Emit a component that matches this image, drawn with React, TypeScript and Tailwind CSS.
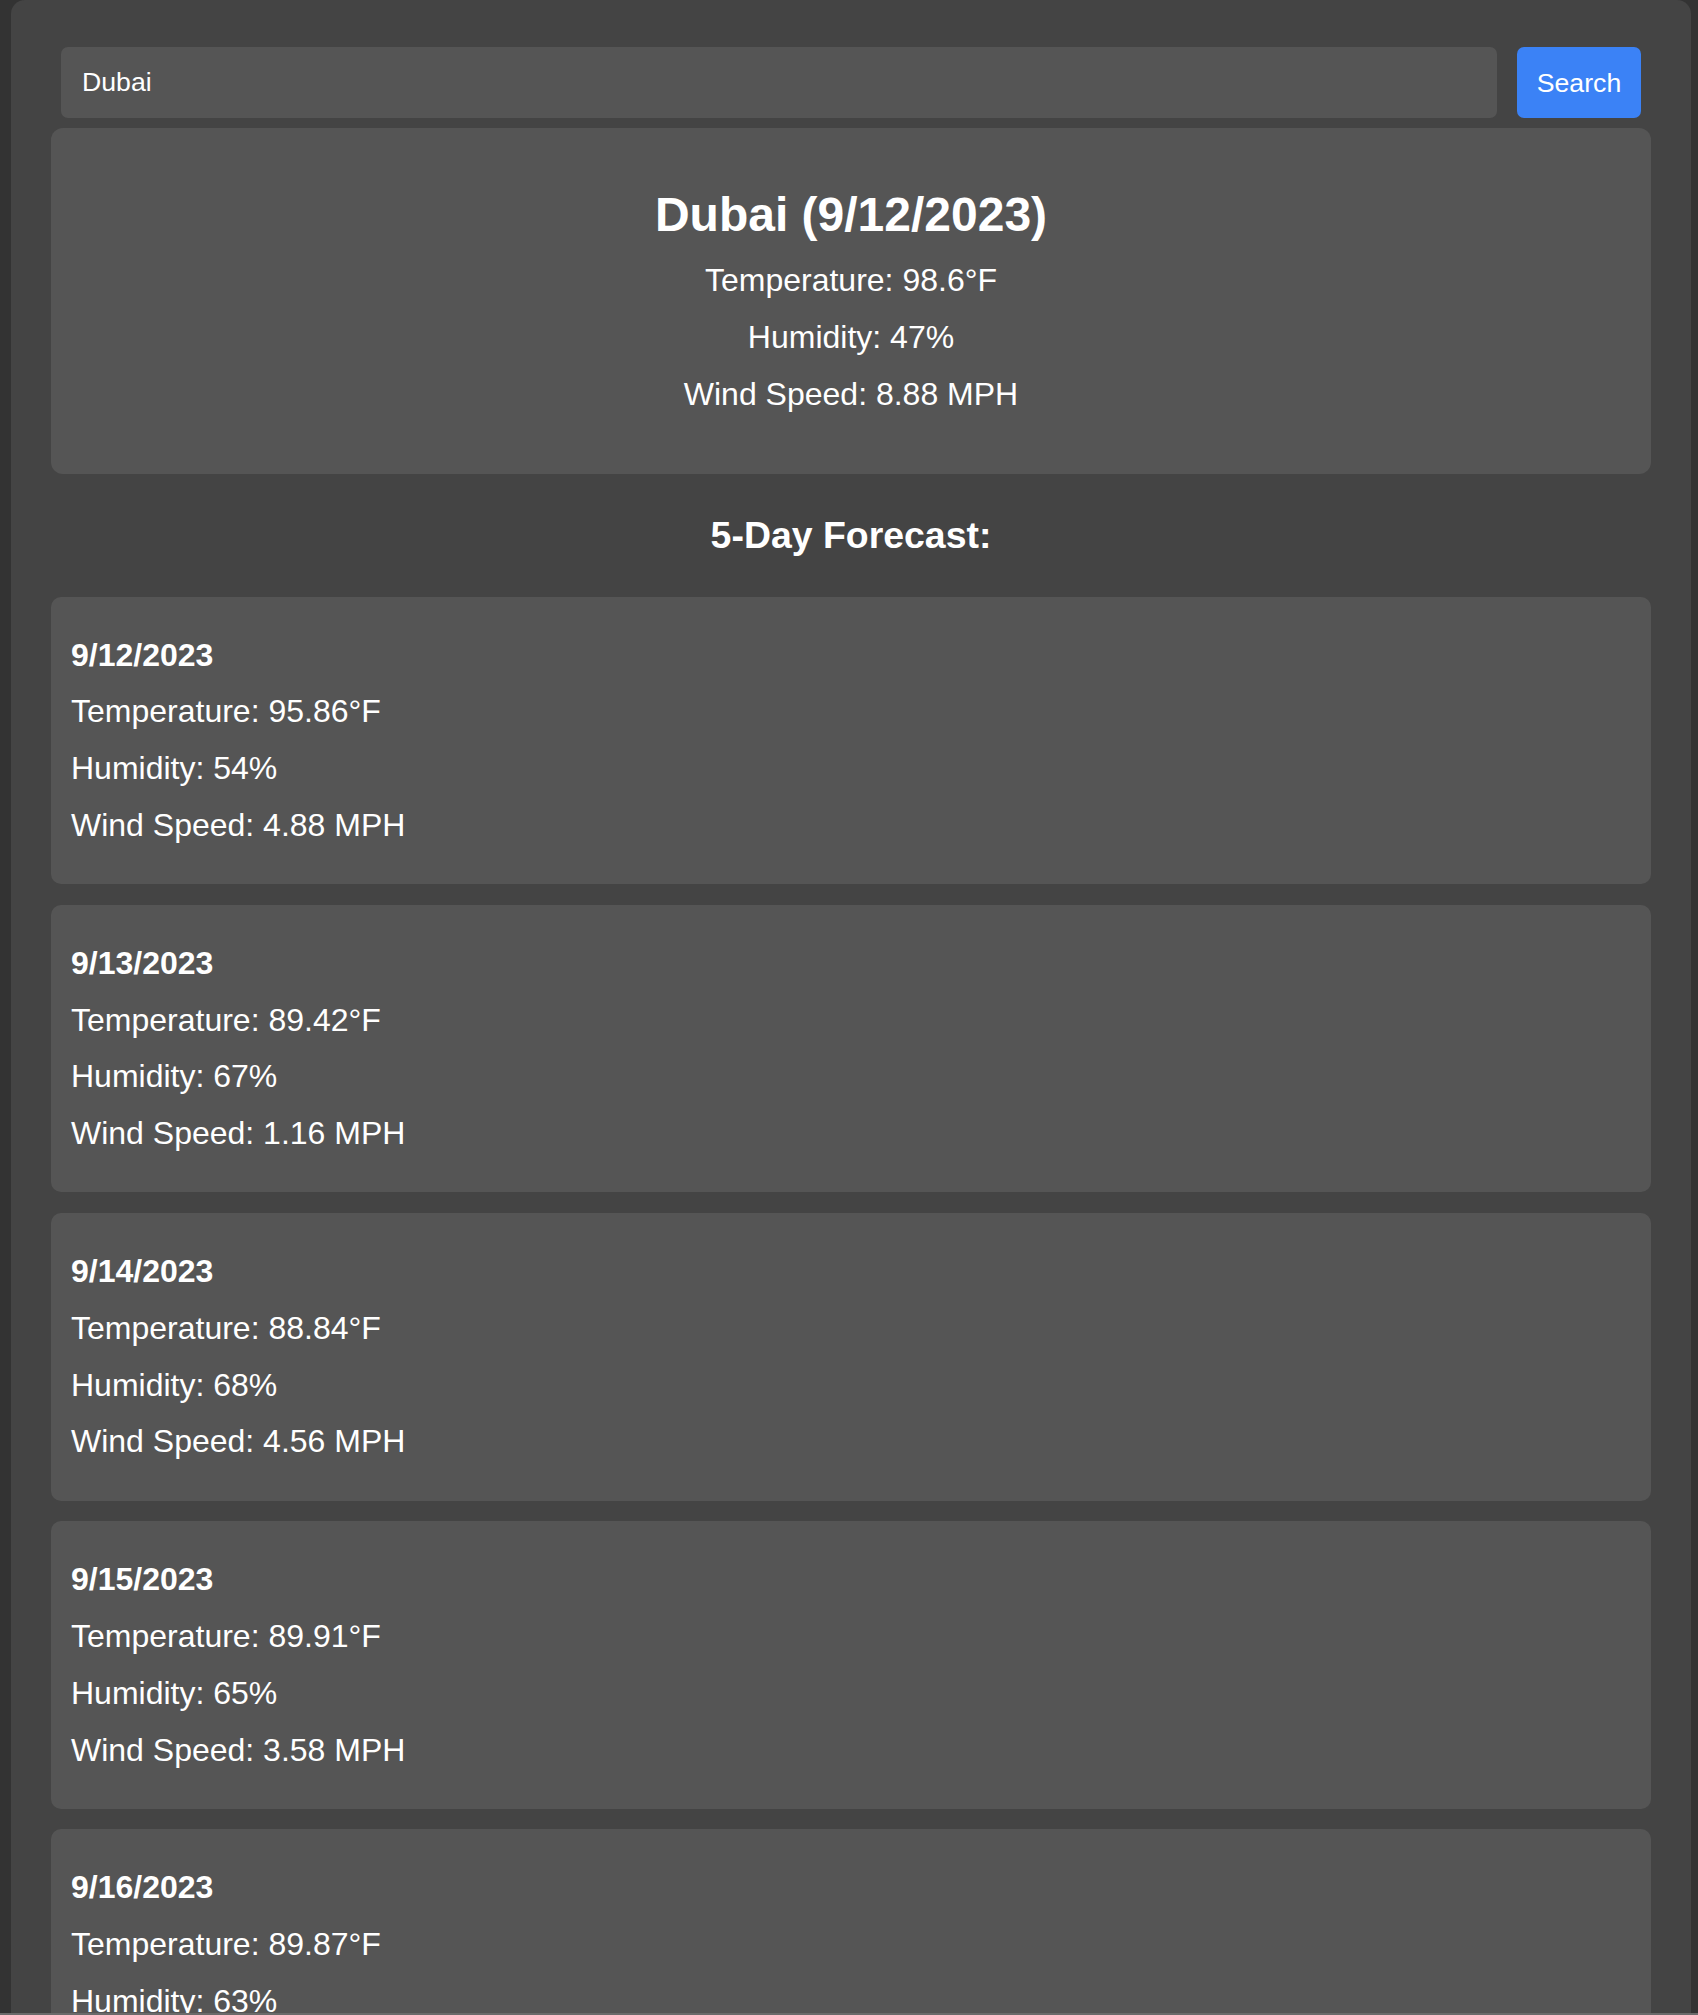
import React from 'react'

type Day = {
    date: string
    temp: string
    humidity: string
    wind: string
}

const forecast: Day[] = [
    { date: '9/12/2023', temp: '95.86', humidity: '54', wind: '4.88' },
    { date: '9/13/2023', temp: '89.42', humidity: '67', wind: '1.16' },
    { date: '9/14/2023', temp: '88.84', humidity: '68', wind: '4.56' },
    { date: '9/15/2023', temp: '89.91', humidity: '65', wind: '3.58' },
    { date: '9/16/2023', temp: '89.87', humidity: '63', wind: '2.41' },
]

const ForecastCard: React.FC<Day> = ({ date, temp, humidity, wind }) => {
    return (
        <div className="flex flex-col gap-[20px] rounded-[10px] bg-[#555555] px-[20px] pt-[40px] pb-[40.5px] text-[32px] leading-[36.8px] text-white">
            <p className="font-bold">{date}</p>
            <p>Temperature: {temp}°F</p>
            <p>Humidity: {humidity}%</p>
            <p>Wind Speed: {wind} MPH</p>
        </div>
    )
}

const App: React.FC = () => {
    return (
        <div
            className="relative h-[2015px] overflow-hidden bg-[#333333] text-white"
            style={{ fontFamily: '"Liberation Sans", Arial, Helvetica, sans-serif' }}
        >
            <div className="ml-[11px] w-[1680px] rounded-t-[14px] bg-[#444444] px-[40px] pt-[47px] pb-[40px]">
                {/* search row */}
                <div className="mx-[10px] flex h-[71px] gap-[20px]">
                    <input
                        type="text"
                        defaultValue="Dubai"
                        className="h-full flex-1 rounded-[7px] bg-[#555555] pl-[21px] text-[26.67px] text-white outline-none"
                        style={{ fontFamily: '"Liberation Sans", Arial, sans-serif' }}
                    />
                    <button
                        className="h-full w-[124px] rounded-[7px] bg-[#3b82f6] text-[26.67px] text-white"
                        style={{ fontFamily: '"Liberation Sans", Arial, sans-serif' }}
                    >
                        Search
                    </button>
                </div>

                {/* current weather */}
                <div className="mt-[10px] flex flex-col items-center rounded-[12px] bg-[#555555] pt-[59px] pb-[61px] text-center">
                    <h2 className="text-[48px] font-bold leading-[55.2px]">Dubai (9/12/2023)</h2>
                    <div className="mt-[20px] flex flex-col gap-[20px] text-[32px] leading-[36.8px]">
                        <p>Temperature: 98.6°F</p>
                        <p>Humidity: 47%</p>
                        <p>Wind Speed: 8.88 MPH</p>
                    </div>
                </div>

                <h3 className="mt-[40px] text-center text-[37.44px] font-bold leading-[43px]">5-Day Forecast:</h3>

                <div className="mt-[40px] flex flex-col gap-[20.5px]">
                    {forecast.map((d) => (
                        <ForecastCard key={d.date} {...d} />
                    ))}
                </div>
            </div>
            <div className="absolute bottom-0 left-0 h-[2px] w-full bg-[#6a6a6a]" />
        </div>
    )
}

export default App
